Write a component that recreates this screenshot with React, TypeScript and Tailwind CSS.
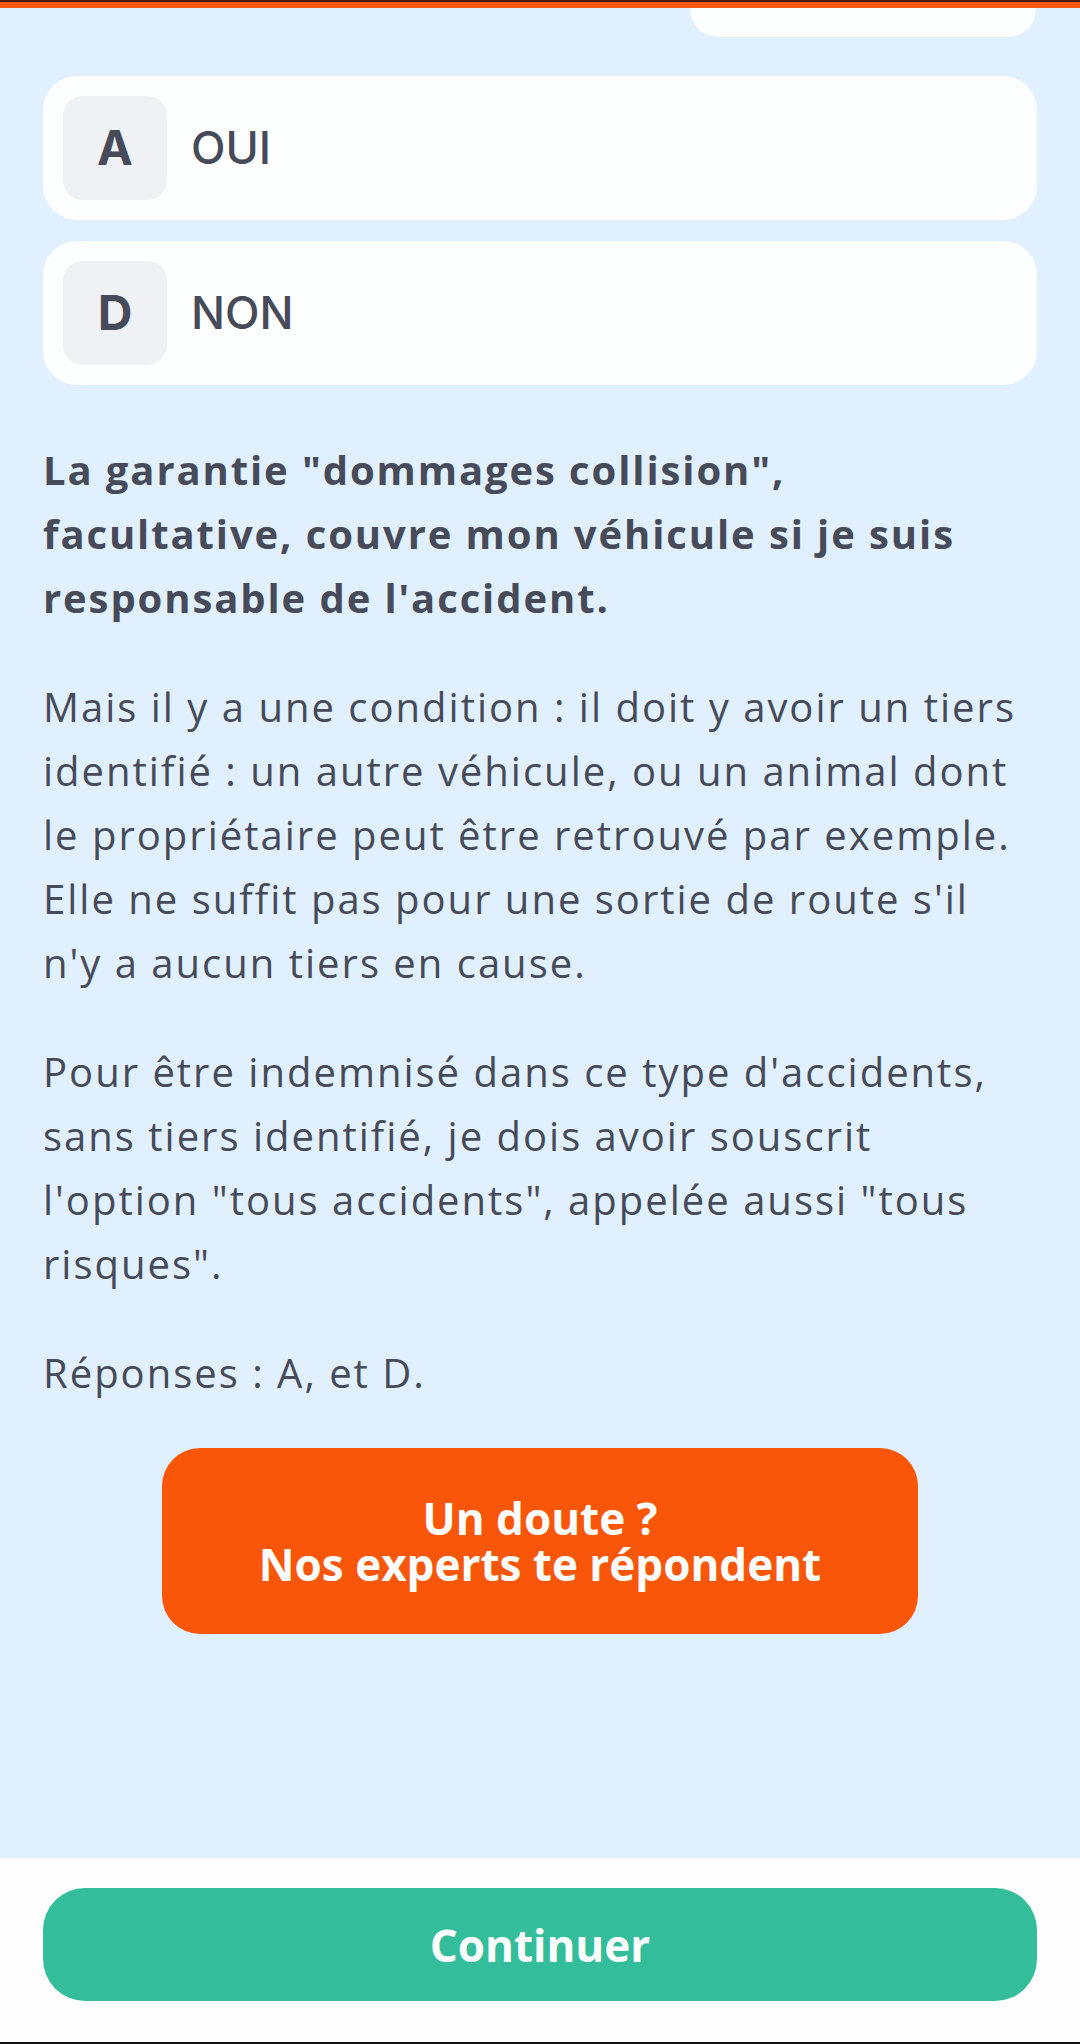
import React from "react";

const font = { fontFamily: '"Open Sans", "Noto Sans", sans-serif' };

function Choice({ letter, label }: { letter: string; label: string }) {
  return (
    <div className="flex h-[144px] items-center gap-[24px] rounded-[34px] bg-[#fdfefe] px-[20px]">
      <div className="flex h-[104px] w-[104px] items-center justify-center rounded-[20px] bg-[#f0f1f5]">
        <span className="font-['Inter',sans-serif] text-[48px] font-bold text-[#464a59]">{letter}</span>
      </div>
      <span className="font-['Inter',sans-serif] text-[45px] font-medium text-[#464a59]">{label}</span>
    </div>
  );
}

// lines kept as in the app so the wrapping matches
function Lines({ lines, className }: { lines: string[]; className?: string }) {
  return (
    <p className={className}>
      {lines.map((line, i) => (
        <React.Fragment key={i}>
          {i > 0 && <br />}
          {line}
        </React.Fragment>
      ))}
    </p>
  );
}

export default function App() {
  return (
    <div className="flex h-[2044px] w-[1080px] flex-col bg-[#e1f0fe]" style={font}>
      {/* top progress bar */}
      <div className="h-[2px] bg-[#4a1a04]" />
      <div className="h-[6px] bg-[#f6580f]" />

      <main className="flex flex-1 flex-col px-[43px]">
        <div className="ml-auto mr-[1px] h-[29px] w-[346px] rounded-b-[28px] bg-[#fdfefe]" />

        <div className="mt-[39px] flex flex-col gap-[21px]">
          <Choice letter="A" label="OUI" />
          <Choice letter="D" label="NON" />
        </div>

        <div className="mt-[53px] flex flex-col gap-[45px] whitespace-nowrap text-[40px] leading-[64px] tracking-[2px] text-[#464a59]">
          <Lines
            className="font-bold tracking-[1.9px]"
            lines={[
              'La garantie "dommages collision",',
              "facultative, couvre mon véhicule si je suis",
              "responsable de l'accident.",
            ]}
          />
          <Lines
            lines={[
              "Mais il y a une condition : il doit y avoir un tiers",
              "identifié : un autre véhicule, ou un animal dont",
              "le propriétaire peut être retrouvé par exemple.",
              "Elle ne suffit pas pour une sortie de route s'il",
              "n'y a aucun tiers en cause.",
            ]}
          />
          <Lines
            lines={[
              "Pour être indemnisé dans ce type d'accidents,",
              "sans tiers identifié, je dois avoir souscrit",
              'l\'option "tous accidents", appelée aussi "tous',
              'risques".',
            ]}
          />
          <p>Réponses : A, et D.</p>
        </div>

        <button className="mx-auto mt-[43px] flex h-[186px] w-[756px] flex-col items-center justify-center rounded-[38px] bg-[#f9560a] text-[44px] font-bold leading-[46px] text-[#fefefe]">
          <span>Un doute ?</span>
          <span>Nos experts te répondent</span>
        </button>
      </main>

      <footer className="flex h-[186px] flex-col bg-[#fefefe]">
        <div className="px-[43px] pt-[30px]">
          <button className="flex h-[113px] w-full items-center justify-center rounded-[42px] bg-[#34bd9b] text-[44px] font-bold text-[#fefefe]">
            Continuer
          </button>
        </div>
        <div className="mt-auto h-[2px] bg-[#111111]" />
      </footer>
    </div>
  );
}
